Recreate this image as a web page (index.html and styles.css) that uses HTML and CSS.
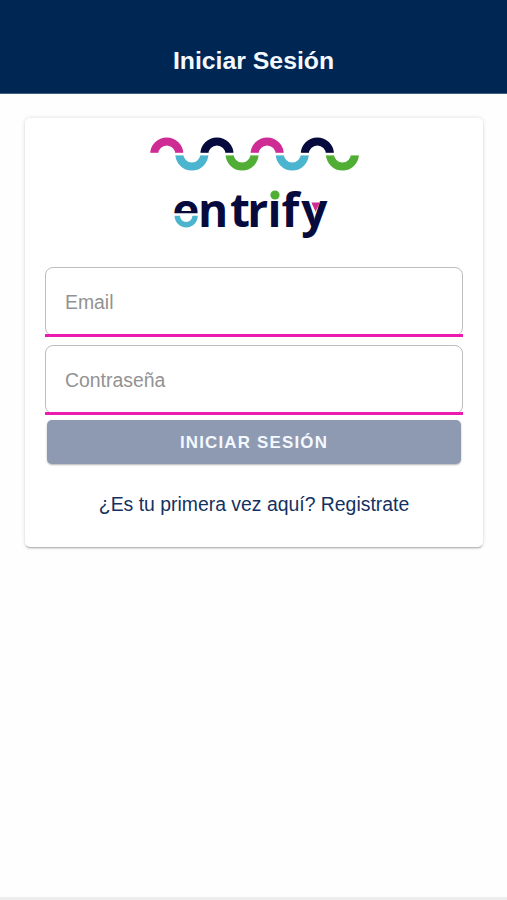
FILE: index.html
```
<!DOCTYPE html>
<html lang="es">
<head>
    <meta charset="UTF-8">
    <meta name="viewport" content="width=device-width, initial-scale=1.0">
    <title>Iniciar Sesión</title>
    <link rel="stylesheet" href="styles.css">
</head>
<body>
    <header class="toolbar">
        <h1>Iniciar Sesión</h1>
    </header>

    <main class="content">
        <form class="card">
            <svg class="logo" width="220" height="115" viewBox="0 0 220 115" role="img" aria-label="entrify">
                <defs>
                    <clipPath id="e-top"><rect x="0" y="60" width="220" height="28.3"/></clipPath>
                </defs>

                <!-- wave -->
                <g fill="none" stroke-width="8">
                    <path stroke="#cf2b95" d="M10.2 29a12.55 12.55 0 0 1 25.1 0M110.6 29a12.55 12.55 0 0 1 25.1 0"/>
                    <path stroke="#4bb4cf" d="M35.3 29a12.55 12.55 0 0 0 25.1 0M135.7 29a12.55 12.55 0 0 0 25.1 0"/>
                    <path stroke="#060a3c" d="M60.4 29a12.55 12.55 0 0 1 25.1 0M160.8 29a12.55 12.55 0 0 1 25.1 0"/>
                    <path stroke="#4fae33" d="M85.5 29a12.55 12.55 0 0 0 25.1 0M185.9 29a12.55 12.55 0 0 0 25.1 0"/>
                </g>
                <rect x="0" y="27.8" width="220" height="2.6" fill="#fff"/>

                <!-- name -->
                <g class="logo-name">
                    <text x="28.3" y="101.7" clip-path="url(#e-top)">e</text>
                    <text x="54 86 103.2 123.5 137.5 157.3" y="101.7">ntrify</text>
                </g>
                <path d="M33.3 90.8a8.9 8.9 0 0 0 17.8 0" fill="none" stroke="#4bb4cf" stroke-width="5.4"/>
                <rect x="124" y="63" width="13.5" height="12.5" fill="#fff"/>
                <circle cx="131" cy="70" r="4.6" fill="#4fae33"/>
                <path d="M167.4 77.5h8.4l-4.2 9.3z" fill="#cf2b95"/>
            </svg>

            <label class="field"><input type="email" placeholder="Email"></label>
            <label class="field"><input type="password" placeholder="Contraseña"></label>
            <button class="submit" type="button">INICIAR SESIÓN</button>
            <a class="register">¿Es tu primera vez aquí? Registrate</a>
        </form>
    </main>

    <footer class="bottom-bar"></footer>
</body>
</html>
```
FILE: styles.css
```
* {
    box-sizing: border-box;
}

body {
    display: flex;
    flex-direction: column;
    height: 100vh;
    margin: 0;
    background-color: #fefefe;
    font-family: "Liberation Sans", Arial, sans-serif;
}

.toolbar {
    height: 94px;
    padding-top: 46px;
    background-color: #002654;
    border-bottom: 1px solid #425d80;
    text-align: center;
}

.toolbar h1 {
    margin: 0;
    font-size: 24.8px;
    line-height: 30px;
    color: #f4f8ff;
}

.content {
    flex: 1;
    padding: 24px 24px 0 25px;
}

.card {
    display: flex;
    flex-direction: column;
    height: 429px;
    padding: 7px 20px 0;
    background-color: #fff;
    border-radius: 5px;
    box-shadow: 0 2px 2px -1px rgba(0, 0, 0, 0.3), 0 0 4px rgba(0, 0, 0, 0.14);
}

.logo {
    align-self: center;
    flex-shrink: 0;
    margin-bottom: 27px;
}

.logo-name {
    font-family: "Open Sans", sans-serif;
    font-size: 46px;
    font-weight: 700;
    fill: #060a3c;
}

.field {
    position: relative;
    flex-shrink: 0;
    height: 70px;
    margin-bottom: 8px;
}

/* underline sits over the rounded border */
.field::after {
    content: "";
    position: absolute;
    left: 0;
    right: 0;
    bottom: 0;
    height: 3px;
    background-color: #ec1cae;
}

.field input {
    display: block;
    width: 100%;
    height: 69px;
    padding: 1px 19px 0;
    background-color: transparent;
    border: 1px solid #bdbdbd;
    border-radius: 8px;
    font-family: inherit;
    font-size: 19.4px;
}

.field input::placeholder {
    color: #929292;
}

.submit {
    height: 44px;
    margin: -3px 2px 0;
    padding: 1px 0 0;
    background-color: #8e9ab2;
    border: none;
    border-radius: 5px;
    box-shadow: 0 1px 2px rgba(0, 0, 0, 0.3);
    font-family: inherit;
    font-size: 16.9px;
    font-weight: bold;
    letter-spacing: 1.2px;
    color: #f4f8ff;
}

.register {
    margin-top: 28px;
    font-size: 19.4px;
    line-height: 24px;
    text-align: center;
    color: #14315f;
}

.bottom-bar {
    height: 3px;
    background-color: #eee;
}
```
